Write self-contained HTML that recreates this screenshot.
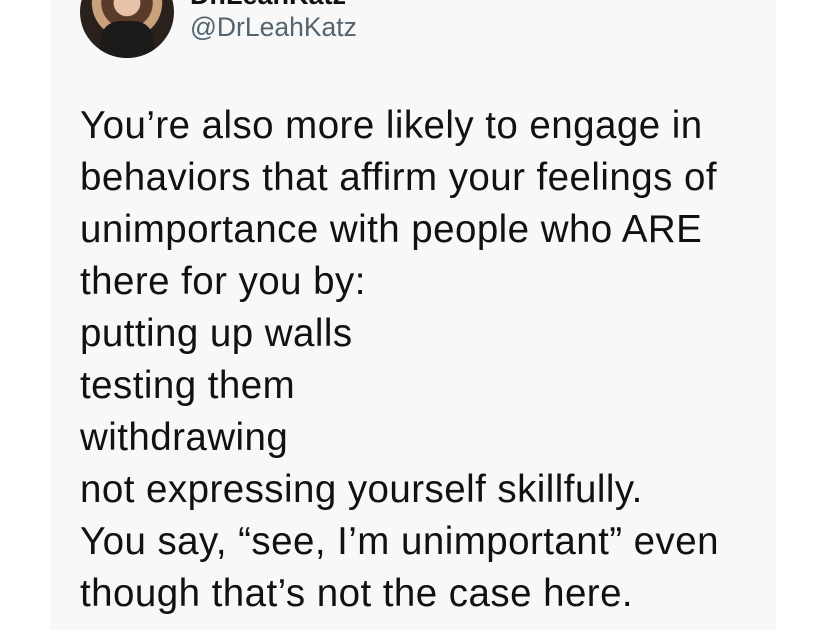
<!DOCTYPE html>
<html><head><style>
body{margin:0;width:825px;height:630px;background:#fff;overflow:hidden;position:relative;font-family:"Liberation Sans",Arial,sans-serif}
.card{position:absolute;left:50px;top:0;width:726px;height:630px;background:#f8f8f9}
.av{position:absolute;left:80px;top:-34px;width:94px;height:92px;border-radius:50%;background:radial-gradient(circle at 50% 40%,#e8c2a8 0 18%,#5a3a2a 19% 35%,#c9a27a 36% 48%,#2a211d 49%);overflow:hidden}
.av:after{content:"";position:absolute;left:20px;top:55px;width:54px;height:40px;background:#1d1a1a;border-radius:20px 20px 0 0}
.name{position:absolute;left:190px;top:-20px;font-size:27px;font-weight:bold;color:#111}
.h{position:absolute;left:190px;top:12px;font-size:26.5px;color:#536471}
.t{position:absolute;left:80px;top:100px;font-size:38.5px;letter-spacing:0.45px;line-height:52px;color:#111;white-space:pre}
</style></head><body>
<div class="card"></div>
<div class="av"></div>
<div class="name">Dr.LeahKatz</div>
<div class="h">@DrLeahKatz</div>
<div class="t">You’re also more likely to engage in
behaviors that affirm your feelings of
unimportance with people who ARE
there for you by:
putting up walls
testing them
withdrawing
not expressing yourself skillfully.
You say, “see, I’m unimportant” even
though that’s not the case here.</div>
</body></html>
